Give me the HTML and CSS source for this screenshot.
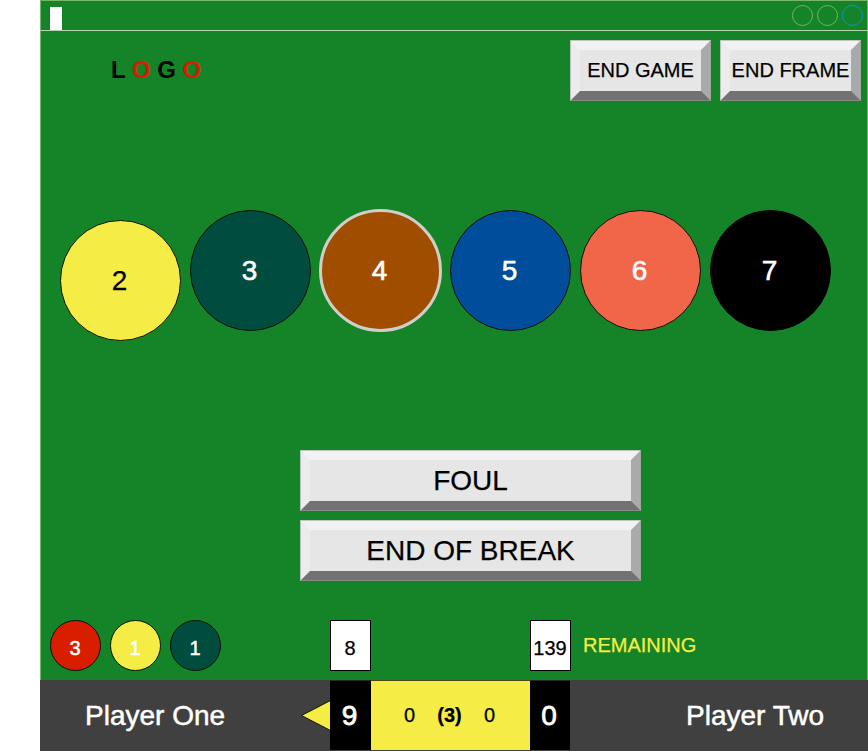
FILE: index.html
```html
<!DOCTYPE html>
<html lang="en">
<head>
<meta charset="utf-8">
<title>Snooker scoreboard</title>
<link rel="stylesheet" href="styles.css">
</head>
<body>
<div class="app">
  <header class="titlebar">
    <span class="grip"></span>
    <div class="window-controls">
      <span class="control"></span>
      <span class="control"></span>
      <span class="control control-active"></span>
    </div>
  </header>
  <main class="table">
    <div class="top">
      <div class="logo">L <span class="logo-red">O</span> G <span class="logo-red">O</span></div>
      <div class="top-actions">
        <button class="button">END GAME</button>
        <button class="button">END FRAME</button>
      </div>
    </div>
    <div class="balls">
      <div class="ball yellow lowered">2</div>
      <div class="ball green">3</div>
      <div class="ball brown selected">4</div>
      <div class="ball blue">5</div>
      <div class="ball pink">6</div>
      <div class="ball black">7</div>
    </div>
    <div class="actions">
      <button class="button button-large">FOUL</button>
      <button class="button button-large">END OF BREAK</button>
    </div>
    <div class="status">
      <div class="potted">
        <div class="small-ball red">3</div>
        <div class="small-ball yellow-light">1</div>
        <div class="small-ball green">1</div>
      </div>
      <div class="count">8</div>
      <div class="count">139</div>
      <div class="remaining">REMAINING</div>
    </div>
  </main>
  <footer class="scoreboard">
    <div class="player player-one">Player One</div>
    <svg class="arrow" width="30" height="71" viewBox="0 0 30 71"><path d="M30.5 20.5 L1.5 35.5 L30.5 50.5" fill="#f5ec46" stroke="#141200"/></svg>
    <div class="score">9</div>
    <div class="frames"><span>0</span><strong>(3)</strong><span>0</span></div>
    <div class="score">0</div>
    <div class="player player-two">Player Two</div>
  </footer>
</div>
</body>
</html>
```
FILE: styles.css
```css
* { box-sizing: border-box; }

body {
  margin: 0;
  background: #fff;
  font-family: "Liberation Sans", Arial, sans-serif;
  font-size: 20px;
  color: #000;
  -webkit-text-stroke: 0.25px;
}

.app {
  width: 828px;
  height: 751px;
  margin-left: 40px;
  display: flex;
  flex-direction: column;
  background: #158327;
  overflow: hidden;
}

.titlebar {
  height: 31px;
  flex: none;
  display: flex;
  justify-content: space-between;
  border: 1px solid #78b469;
  border-bottom-color: #b5d7ac;
  padding: 4px 4px 0 9px;
}

.grip {
  width: 12px;
  height: 23px;
  margin-top: 2px;
  background: #fcfdff;
}

.window-controls { display: flex; gap: 4px; }

.control {
  width: 21px;
  height: 21px;
  border: 1px solid #75b55c;
  border-radius: 50%;
}

.control-active { border-color: #0c93dc; }

.table {
  height: 649px;
  flex: none;
  display: flex;
  flex-direction: column;
  border: solid #78b469;
  border-width: 0 1px;
}

.top {
  display: flex;
  justify-content: space-between;
  padding: 9px 6px 0 70px;
}

.logo {
  font-size: 24px;
  line-height: 60px;
  font-weight: bold;
  -webkit-text-stroke: 0;
}

.logo-red { color: #d51f02; }

.top-actions { display: flex; gap: 9px; }

.button {
  width: 141px;
  height: 61px;
  padding: 0 0 1px;
  border: 10px solid;
  border-color: #f2f2f2 #aaa #727272 #ececec;
  background: #e6e6e6;
  outline: 1px solid rgba(150, 160, 150, 0.55);
  outline-offset: -1px;
  font: inherit;
  line-height: 40px;
  color: #000;
  white-space: nowrap;
  -webkit-text-stroke: 0.25px;
}

.button-large {
  width: 341px;
  padding: 1px 0 0;
  font-size: 28px;
}

.balls {
  display: flex;
  gap: 9px;
  margin-top: 109px;
  padding-left: 19px;
}

.ball {
  width: 121px;
  height: 121px;
  flex: none;
  padding-right: 2px;
  border: 1px solid #0a0f05;
  border-radius: 50%;
  color: #fff;
  font-size: 28px;
  line-height: 120px;
  text-align: center;
  -webkit-text-stroke: 0.6px;
}

.lowered { margin-top: 10px; margin-bottom: -10px; }

.selected {
  width: 123px;
  height: 123px;
  margin: -1px;
  border: 3px solid #cfcfca;
  line-height: 118px;
}

.yellow { background: #f5ec46; color: #000; -webkit-text-stroke: 0.25px; }
.yellow-light { background: #f5ec46; }
.green { background: #004d3f; }
.brown { background: #a04d00; }
.blue { background: #004e9b; }
.pink { background: #f16649; }
.black { background: #000; border-color: #000; }
.red { background: #d91e00; }

.actions {
  display: flex;
  flex-direction: column;
  align-items: flex-start;
  gap: 9px;
  margin-top: 119px;
  padding-left: 259px;
}

.status {
  display: grid;
  grid-template-columns: 280px 200px 53px 1fr;
  margin-top: 39px;
  padding-left: 9px;
}

.potted { display: flex; gap: 9px; }

.small-ball {
  width: 51px;
  height: 51px;
  padding-right: 1px;
  border: 1px solid #0a0f05;
  border-radius: 50%;
  color: #fff;
  line-height: 54px;
  text-align: center;
  -webkit-text-stroke: 0.5px;
}

.count {
  width: 41px;
  height: 51px;
  padding-right: 1px;
  border: 1px solid #000;
  background: #fff;
  line-height: 54px;
  display: flex;
  justify-content: center;
}

.remaining {
  color: #f5ee46;
  line-height: 50px;
}

.scoreboard {
  height: 71px;
  flex: none;
  display: grid;
  grid-template-columns: 260px 30px 41px 159px 40px 1fr;
  background: #404040;
  line-height: 72px;
}

.player {
  color: #fff;
  font-size: 28px;
  -webkit-text-stroke: 0.5px;
}

.player-one { padding-left: 45px; }
.player-two { padding-left: 116px; }

.score {
  height: 70px;
  padding-right: 2px;
  border-top: 1px solid #262626;
  background: #000;
  color: #fff;
  font-size: 28px;
  line-height: 70px;
  text-align: center;
  -webkit-text-stroke: 0.8px;
}

.frames {
  height: 70px;
  display: grid;
  grid-template-columns: 40px 40px 40px;
  justify-content: center;
  padding-right: 2px;
  border-top: 1px solid #4a4710;
  background: #f5ec46;
  line-height: 68px;
  text-align: center;
}
```
